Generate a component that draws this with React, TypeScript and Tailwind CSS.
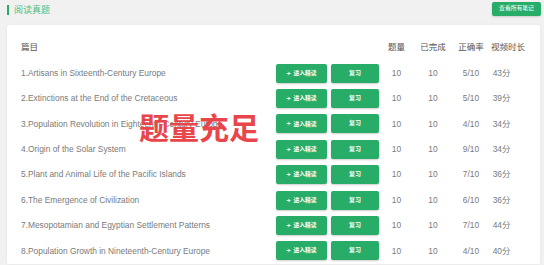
import { ArrowRight } from 'lucide-react';

interface Exam {
  title: string;
  total: number;
  done: number;
  correct: string;
  video: string;
}

const EXAMS: Exam[] = [
  { title: '1.Artisans in Sixteenth-Century Europe', total: 10, done: 10, correct: '5/10', video: '43分' },
  { title: '2.Extinctions at the End of the Cretaceous', total: 10, done: 10, correct: '5/10', video: '39分' },
  { title: '3.Population Revolution in Eighteenth-Century Europe', total: 10, done: 10, correct: '4/10', video: '34分' },
  { title: '4.Origin of the Solar System', total: 10, done: 10, correct: '9/10', video: '34分' },
  { title: '5.Plant and Animal Life of the Pacific Islands', total: 10, done: 10, correct: '7/10', video: '36分' },
  { title: '6.The Emergence of Civilization', total: 10, done: 10, correct: '6/10', video: '36分' },
  { title: '7.Mesopotamian and Egyptian Settlement Patterns', total: 10, done: 10, correct: '7/10', video: '44分' },
  { title: '8.Population Growth in Nineteenth-Century Europe', total: 10, done: 10, correct: '4/10', video: '40分' },
];

const ROW = 'grid grid-cols-[255px_103px_35px_38px_38px_36px] items-center h-[25.4px]';

const App = () => {
  return (
    <div
      className="relative h-[265px] w-[544px] overflow-hidden bg-[#f1f1f1]"
      style={{ fontFamily: '"Liberation Sans", Arial, "Noto Sans CJK SC", sans-serif' }}
    >
      <header className="flex h-[25px] items-start justify-between pl-[7px] pr-[3px]">
        <div className="mt-[5px] flex items-center gap-[5px]">
          <span className="h-[10px] w-[2px] bg-[#27ad68]" />
          <span className="text-[9px] leading-none text-[#4cc185]">阅读真题</span>
        </div>
        <button
          type="button"
          className="mt-[2px] h-[14px] w-[49px] rounded-[2px] bg-[#27ad68] text-[5.8px] leading-none text-white shadow-[0_1px_2px_rgba(0,0,0,0.15)]"
        >
          查看所有笔记
        </button>
      </header>

      <section className="ml-[7px] w-[533px] rounded-[2px] bg-white pl-[14px] pt-[10px] shadow-[0_0_3px_rgba(0,0,0,0.06)]">
        <div className={`${ROW} text-[8.5px] text-[#555]`}>
          <span>篇目</span>
          <span />
          <span className="text-center">题量</span>
          <span className="text-center">已完成</span>
          <span className="text-center">正确率</span>
          <span className="text-center">视频时长</span>
        </div>
        {EXAMS.map((exam) => (
          <div key={exam.title} className={`${ROW} text-[8.4px] text-[#7a7a7a]`}>
            <span className="truncate whitespace-nowrap">{exam.title}</span>
            <div className="flex gap-[4px]">
              <button
                type="button"
                className="flex h-[19px] w-[51px] items-center justify-center gap-[2px] rounded-[2px] bg-[#27ad68] text-[5.8px] font-semibold text-white shadow-[0_1px_2px_rgba(0,0,0,0.2)]"
              >
                <ArrowRight size={5} strokeWidth={4} />
                进入精读
              </button>
              <button
                type="button"
                className="h-[19px] w-[48px] rounded-[2px] bg-[#27ad68] text-[6px] font-semibold text-white shadow-[0_1px_2px_rgba(0,0,0,0.2)]"
              >
                复习
              </button>
            </div>
            <span className="text-center">{exam.total}</span>
            <span className="text-center">{exam.done}</span>
            <span className="text-center">{exam.correct}</span>
            <span className="pr-[13px] text-center">{exam.video}</span>
          </div>
        ))}
      </section>

      <p
        className="absolute left-[139px] top-[111px] text-[30px] font-bold leading-none text-[#e8464b]"
        style={{ fontFamily: '"Noto Sans CJK SC", sans-serif' }}
      >
        题量充足
      </p>
    </div>
  );
};

export default App;
